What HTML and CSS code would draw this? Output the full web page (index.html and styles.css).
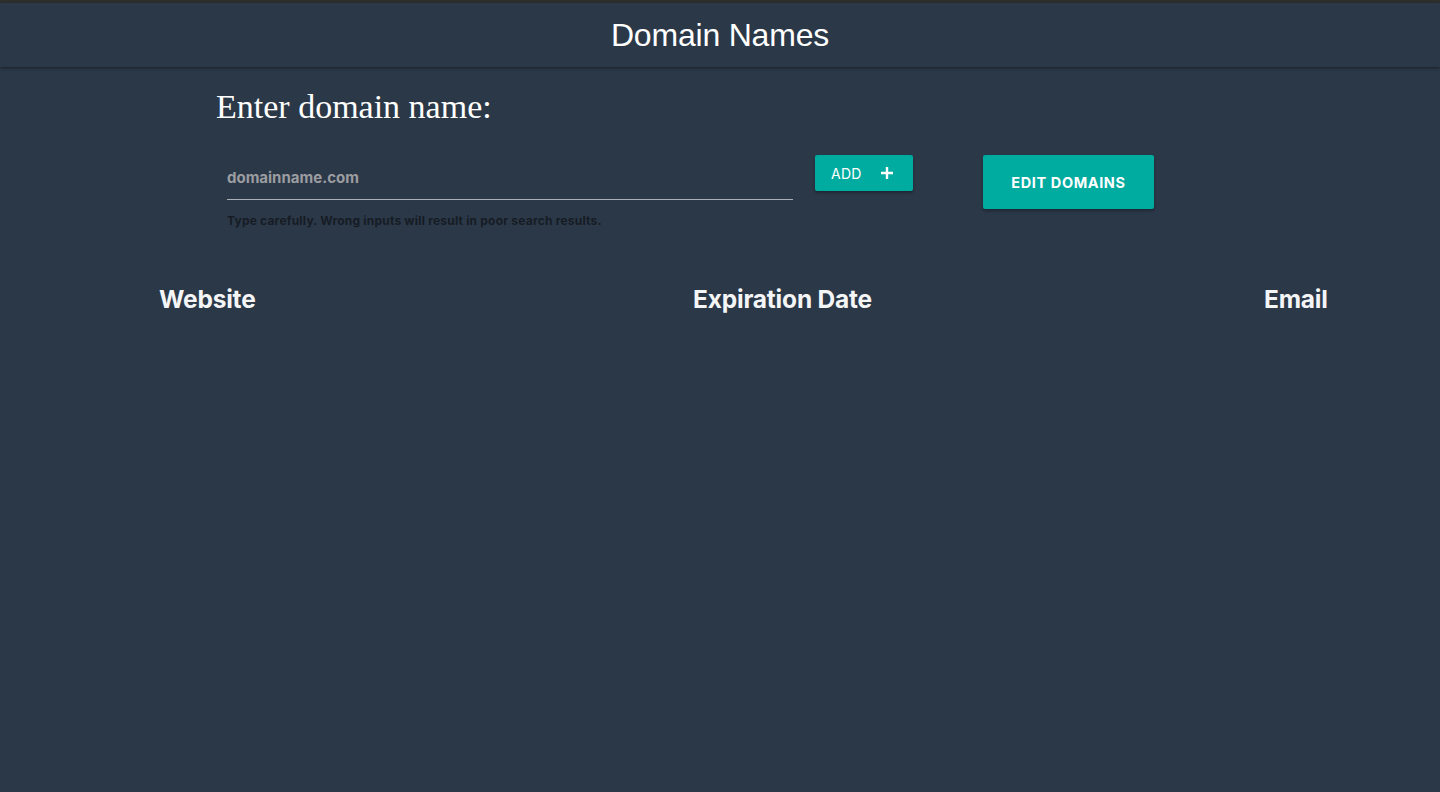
FILE: index.html
```html
<!DOCTYPE html>
<html>
<head>
<meta charset="utf-8">
<link rel="stylesheet" href="styles.css">
</head>
<body>
<div class="topstrip"></div>
<header class="appbar"><h1 class="title">Domain Names</h1></header>
<main class="content">
  <h2 class="prompt">Enter domain name:</h2>
  <div class="form-row">
    <div class="field">
      <input class="input" type="text" placeholder="domainname.com">
      <div class="helper">Type carefully. Wrong inputs will result in poor search results.</div>
    </div>
    <button class="btn btn-add">ADD <svg class="plus" width="14" height="14" viewBox="0 0 14 14"><path d="M7 1v12M1 7h12" stroke="#fff" stroke-width="2.4" fill="none"/></svg></button>
    <button class="btn btn-edit">EDIT DOMAINS</button>
  </div>
  <div class="table-head">
    <div class="th">Website</div>
    <div class="th">Expiration Date</div>
    <div class="th">Email</div>
  </div>
</main>
</body>
</html>
```
FILE: styles.css
```css
html, body { margin: 0; padding: 0; }
body {
  background: #2b3848;
  min-height: 792px;
  overflow: hidden;
  font-family: Inter, "Liberation Sans", sans-serif;
}
.topstrip { height: 3px; background: #2f2f2f; }
.appbar {
  height: 64px;
  background: #2b3848;
  box-shadow: 0 1px 3px rgba(0,0,0,0.45);
  display: flex;
  align-items: center;
  justify-content: center;
  position: relative;
}
.title {
  margin: 0;
  font-family: "Liberation Sans", Arial, sans-serif;
  font-weight: 400;
  font-size: 32px;
  color: #fff;
  letter-spacing: -0.2px;
}
.prompt {
  margin: 21px 0 0 216px;
  font-family: "Liberation Serif", "Times New Roman", serif;
  font-weight: 400;
  font-size: 34px;
  line-height: 38px;
  color: #fff;
}
.form-row {
  display: flex;
  align-items: flex-start;
  margin-top: 29px;
  padding-left: 227px;
}
.field { width: 566px; }
.input {
  display: block;
  width: 100%;
  box-sizing: border-box;
  background: transparent;
  border: none;
  border-bottom: 1px solid #a9b0b8;
  height: 45px;
  padding: 0;
  font-family: Inter, "Liberation Sans", sans-serif;
  font-weight: 700;
  font-size: 15px;
  color: #fff;
  outline: none;
}
.input::placeholder { color: #9b9da0; font-weight: 700; }
.helper {
  margin-top: 13px;
  font-size: 12px;
  font-weight: 700;
  letter-spacing: 0.2px;
  color: #161c24;
}
.btn {
  border: none;
  background: #00ab9f;
  color: #fff;
  border-radius: 2px;
  box-shadow: 0 2px 3px rgba(0,0,0,0.3);
  font-family: Inter, "Liberation Sans", sans-serif;
  cursor: pointer;
  padding: 0;
}
.btn-add {
  margin-left: 22px;
  width: 98px;
  height: 36px;
  font-size: 14px;
  font-weight: 400;
  display: flex;
  align-items: center;
  justify-content: flex-start;
  padding-left: 16px;
  box-sizing: border-box;
  letter-spacing: 0.3px;
}
.plus { margin-left: 18px; }
.btn-edit {
  margin-left: 70px;
  width: 171px;
  height: 54px;
  font-size: 14.5px;
  font-weight: 700;
  letter-spacing: 0.6px;
}
.table-head {
  display: grid;
  grid-template-columns: 534px 571px auto;
  padding-left: 159px;
  margin-top: 56px;
  height: 30px;
  align-items: center;
}
.th {
  font-size: 24.5px;
  font-weight: 700;
  color: #f4f5f6;
  letter-spacing: -0.2px;
}
```
